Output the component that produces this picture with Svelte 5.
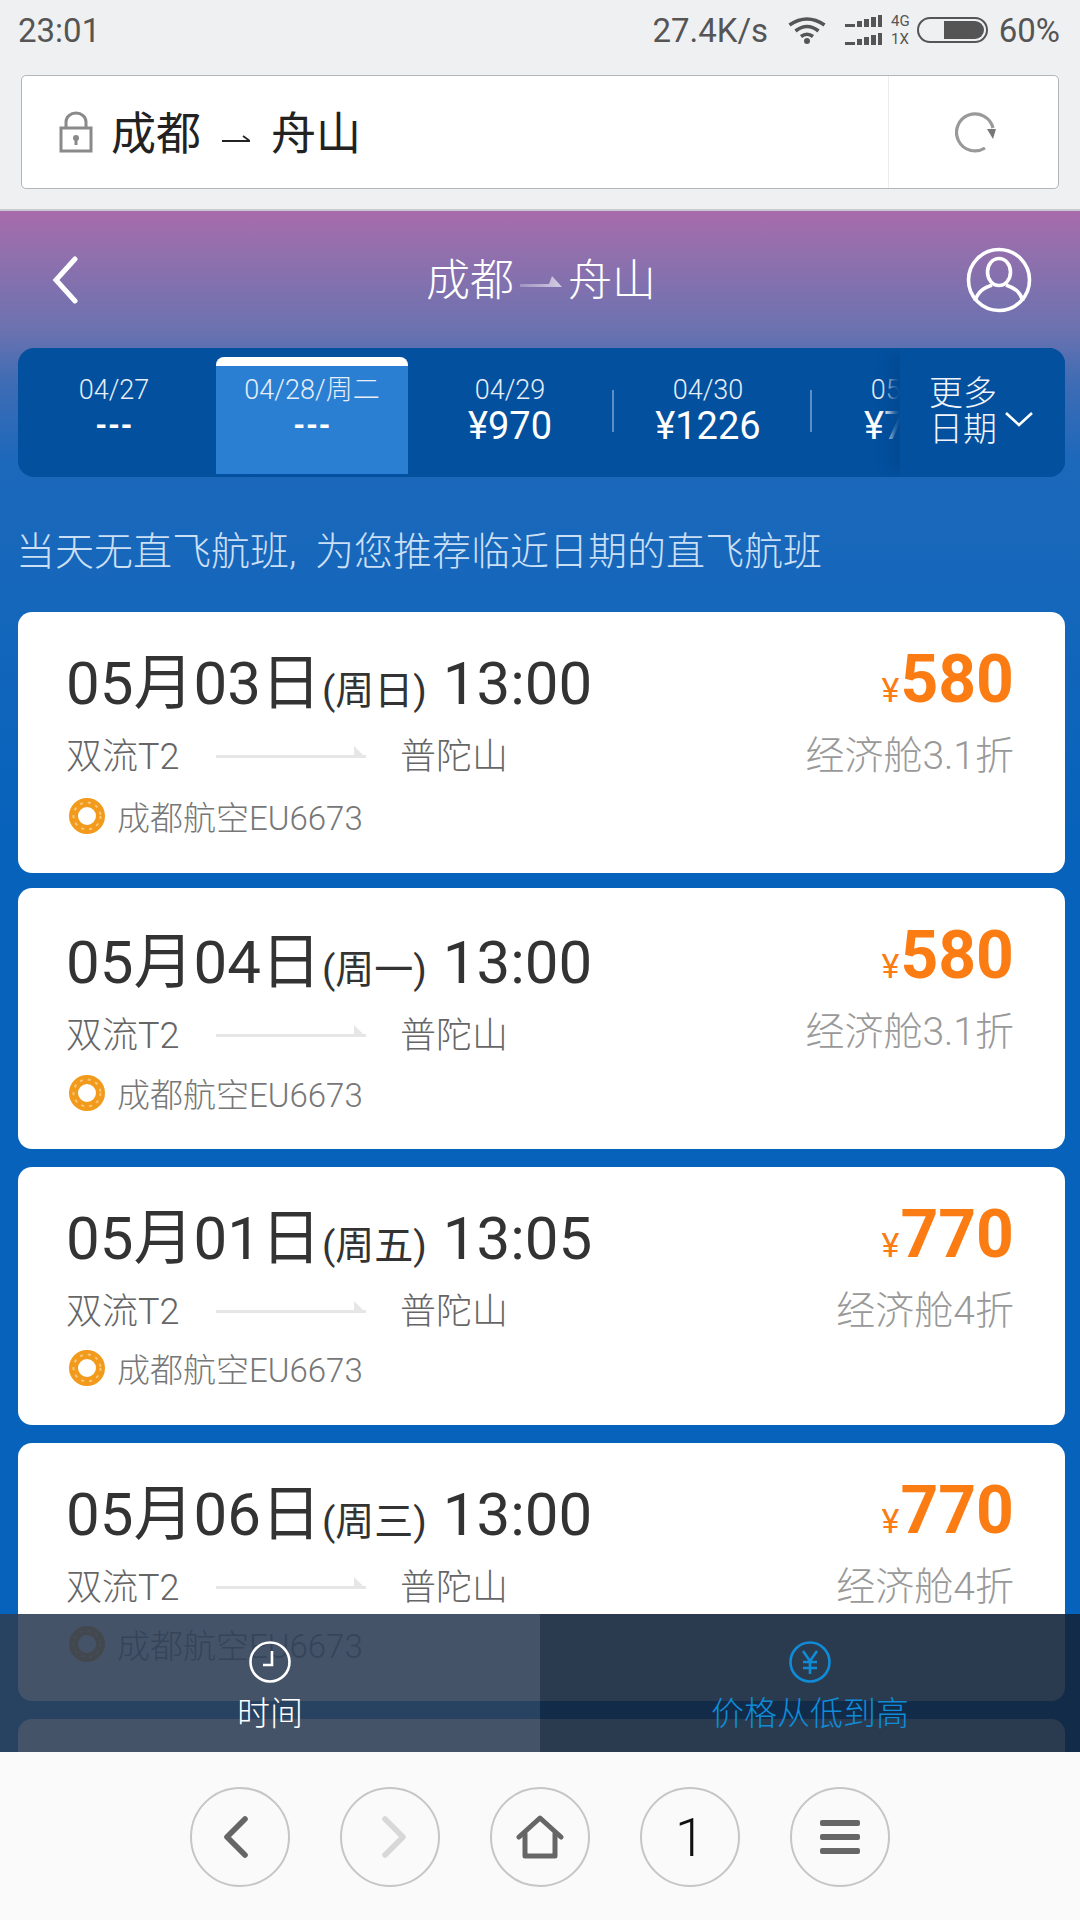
<script>
  const dates = [
    { day: '04/27', price: '---' },
    { day: '04/28/周二', price: '---', active: true },
    { day: '04/29', price: '¥970', line: true },
    { day: '04/30', price: '¥1226', line: true },
    { day: '05/01', price: '¥770' }
  ];

  const flights = [
    { date: '05月03日', week: '周日', time: '13:00', price: 580, cabin: '经济舱3.1折' },
    { date: '05月04日', week: '周一', time: '13:00', price: 580, cabin: '经济舱3.1折' },
    { date: '05月01日', week: '周五', time: '13:05', price: 770, cabin: '经济舱4折' },
    { date: '05月06日', week: '周三', time: '13:00', price: 770, cabin: '经济舱4折' }
  ];
</script>

<div class="screen">
  <div class="status">
    <span>23:01</span>
    <div class="status-right">
      <span>27.4K/s</span>
      <svg class="wifi" width="38" height="28" viewBox="0 0 38 28" fill="none" stroke="#555" stroke-width="3.6">
        <path d="M1.5 9 Q19 -3 36.5 9" />
        <path d="M7.5 15 Q19 6 30.5 15" />
        <path d="M13 20.5 Q19 16 25 20.5" />
        <circle cx="19" cy="25" r="3" fill="#555" stroke="none" />
      </svg>
      <svg class="signal" width="37" height="30" viewBox="0 0 37 30" fill="#555">
        <rect x="0" y="9" width="10" height="3" /><rect x="12" y="6" width="5" height="6" /><rect x="19" y="4" width="5" height="8" /><rect x="26" y="2" width="5" height="10" /><rect x="33" y="0" width="4" height="12" />
        <rect x="0" y="27" width="10" height="3" /><rect x="12" y="24" width="5" height="6" /><rect x="19" y="22" width="5" height="8" /><rect x="26" y="20" width="5" height="10" /><rect x="33" y="18" width="4" height="12" />
      </svg>
      <div class="net"><span>4G</span><span>1X</span></div>
      <div class="battery"><i></i></div>
      <span class="percent">60%</span>
    </div>
  </div>

  <div class="address-wrap">
    <div class="address">
      <div class="address-main">
        <svg width="34" height="42" viewBox="0 0 34 42" fill="none" stroke="#8a8a8a" stroke-width="3">
          <rect x="2" y="17" width="30" height="23" />
          <path d="M7 17 V11 a10 9 0 0 1 20 0 V17" />
          <circle cx="17" cy="27" r="3" fill="#8a8a8a" stroke="none" />
          <rect x="15.5" y="28" width="3" height="6" fill="#8a8a8a" stroke="none" />
        </svg>
        <span class="address-text">成都</span>
        <svg class="address-arrow" width="28" height="12" viewBox="0 0 28 12" fill="none" stroke="#222" stroke-width="1.8">
          <path d="M0 9 H28 L21 4" />
        </svg>
        <span class="address-text">舟山</span>
      </div>
      <div class="reload">
        <svg width="42" height="42" viewBox="0 0 42 42" fill="none" stroke="#999" stroke-width="3.2">
          <path d="M30 37 A18.5 18.5 0 1 1 38 17" />
          <path d="M32 18 L41 18 L38 28 Z" fill="#777" stroke="none" />
        </svg>
      </div>
    </div>
  </div>

  <div class="page">
    <div class="top">
      <svg width="30" height="48" viewBox="0 0 30 48" fill="none" stroke="#fff" stroke-width="5" stroke-linecap="round">
        <path d="M25 3 L6 24 L25 45" />
      </svg>
      <div class="title">
        <span>成都</span>
        <svg width="42" height="16" viewBox="0 0 42 16">
          <defs>
            <linearGradient id="titleArrow">
              <stop offset="0" stop-color="#fff" stop-opacity="0.25" />
              <stop offset="1" stop-color="#fff" stop-opacity="0.65" />
            </linearGradient>
          </defs>
          <path d="M0 10 H29 L32 2 L42 13 H0 Z" fill="url(#titleArrow)" />
        </svg>
        <span>舟山</span>
      </div>
      <svg class="avatar" width="66" height="66" viewBox="0 0 66 66" fill="none" stroke="#fff" stroke-width="3.6">
        <circle cx="33" cy="33" r="30.5" />
        <ellipse cx="33" cy="25" rx="11.5" ry="13.5" />
        <path d="M9 54 C12 44 18 41 26 38 M57 54 C54 44 48 41 40 38" />
      </svg>
    </div>

    <div class="strip">
      <div class="strip-days">
        {#each dates as d}
          <div class="slot" class:line={d.line}>
            <div class="day" class:active={d.active}>
              <div class="day-date">{d.day}</div>
              <div class="day-price" class:none={d.price === '---'}>{d.price}</div>
            </div>
          </div>
        {/each}
      </div>
      <div class="more">
        <div class="more-text">更多<br />日期</div>
        <svg width="30" height="16" viewBox="0 0 30 16" fill="none" stroke="#fff" stroke-width="2.6">
          <path d="M2 2 L15 14 L28 2" />
        </svg>
      </div>
    </div>

    <p class="notice">当天无直飞航班, 为您推荐临近日期的直飞航班</p>

    <div class="list">
      {#each flights as f}
        <div class="card">
          <div class="card-left">
            <div class="when">
              <span>{f.date}</span><span class="week">({f.week})</span><span class="time">{f.time}</span>
            </div>
            <div class="route">
              <span class="from">双流T2</span>
              <svg width="150" height="16" viewBox="0 0 150 16">
                <rect x="0" y="10" width="150" height="3" fill="#e6e6e6" /><path d="M138 13 L138 1 L150 13 Z" fill="#e6e6e6" />
              </svg>
              <span class="to">普陀山</span>
            </div>
            <div class="airline">
              <svg width="36" height="36" viewBox="0 0 36 36" fill="none">
                <circle cx="18" cy="18" r="13.5" stroke="#f29a1c" stroke-width="9" />
                <circle cx="18" cy="18" r="13.5" stroke="#fbc67a" stroke-width="2" stroke-dasharray="3 5" />
              </svg>
              <span>成都航空EU6673</span>
            </div>
          </div>
          <div class="card-right">
            <div class="price"><span class="yen">¥</span>{f.price}</div>
            <div class="cabin">{f.cabin}</div>
          </div>
        </div>
      {/each}
      <div class="card"></div>
    </div>

    <div class="sortbar">
      <div class="sort sort-time">
        <svg width="42" height="42" viewBox="0 0 42 42" fill="none" stroke="#fff" stroke-width="2.6">
          <circle cx="21" cy="21" r="19.5" />
          <path d="M23 10 V24 H14" />
        </svg>
        <span>时间</span>
      </div>
      <div class="sort sort-price">
        <svg width="42" height="42" viewBox="0 0 42 42" fill="none" stroke="#0f8bd8" stroke-width="2.6">
          <circle cx="21" cy="21" r="19.5" />
          <path d="M14 10 L21 20 L28 10 M21 20 V33 M14 21 H28 M14 27 H28" />
        </svg>
        <span>价格从低到高</span>
      </div>
    </div>
  </div>

  <div class="browser-nav">
    <div class="round">
      <svg class="nav-back" width="26" height="42" viewBox="0 0 26 42" fill="none" stroke="#666" stroke-width="5.6" stroke-linecap="round" stroke-linejoin="round">
        <path d="M22 3 L4 21 L22 39" />
      </svg>
    </div>
    <div class="round">
      <svg class="nav-next" width="26" height="42" viewBox="0 0 26 42" fill="none" stroke="#d8d8d8" stroke-width="5.6" stroke-linecap="round" stroke-linejoin="round">
        <path d="M4 3 L22 21 L4 39" />
      </svg>
    </div>
    <div class="round">
      <svg width="48" height="44" viewBox="0 0 48 44" fill="none" stroke="#666" stroke-width="5" stroke-linecap="round" stroke-linejoin="round">
        <path d="M3 22 L24 3 L45 22" />
        <path d="M9 19 V41 H39 V19" />
      </svg>
    </div>
    <div class="round count">1</div>
    <div class="round">
      <div class="bars"><i></i><i></i><i></i></div>
    </div>
  </div>
</div>

<style>
  :global(body) {
    margin: 0;
    background: #fafafa;
  }

  .screen {
    width: 1080px;
    height: 1920px;
    overflow: hidden;
    display: flex;
    flex-direction: column;
    font-family: Roboto, "Noto Sans CJK SC", sans-serif;
    color: #333;
  }

  .status {
    height: 60px;
    background: #eff0f2;
    color: #555;
    font-size: 33px;
    display: flex;
    align-items: center;
    justify-content: space-between;
    padding: 0 20px 0 18px;
    flex-shrink: 0;
  }

  .status-right {
    display: flex;
    align-items: center;
  }

  .wifi {
    margin-left: 20px;
  }

  .signal {
    margin-left: 19px;
  }

  .net {
    display: flex;
    flex-direction: column;
    font-size: 15px;
    line-height: 18px;
    margin-left: 9px;
  }

  .battery {
    width: 71px;
    height: 26px;
    border: 2px solid #555;
    border-radius: 14px;
    box-sizing: border-box;
    display: flex;
    justify-content: flex-end;
    padding: 2px;
    margin-left: 7px;
  }

  .battery i {
    width: 40px;
    background: #555;
    border-radius: 0 9px 9px 0;
  }

  .percent {
    margin-left: 11px;
  }

  .address-wrap {
    height: 149px;
    background: #eff0f2;
    padding: 15px 21px 0;
    box-sizing: border-box;
    flex-shrink: 0;
  }

  .address {
    height: 114px;
    box-sizing: border-box;
    background: #fff;
    border: 1px solid #b5b5b5;
    border-radius: 5px;
    display: flex;
  }

  .address-main {
    flex: 1;
    display: flex;
    align-items: center;
    padding-left: 37px;
    border-right: 1px solid #ececec;
  }

  .address-text {
    font-size: 45px;
    color: #222;
    margin: 0 0 4px 18px;
  }

  .address-arrow {
    margin: 12px 3px 0 21px;
  }

  .reload {
    width: 169px;
    display: flex;
    align-items: center;
    justify-content: center;
    padding-left: 4px;
    box-sizing: border-box;
  }

  .page {
    position: relative;
    flex: 1;
    overflow: hidden;
    border-top: 2px solid #c9c9d2;
    padding: 0 15px 0 18px;
    background: linear-gradient(180deg, #a86bab 0, #8d70ad 50px, #6b72b0 120px, #3f6cb4 170px, #1c68bb 250px, #1467bb 400px, #0762bb 620px);
  }

  .top {
    height: 137px;
    display: grid;
    grid-template-columns: 1fr auto 1fr;
    align-items: center;
    padding: 0 33px 0 32px;
  }

  .avatar {
    justify-self: end;
  }

  .title {
    display: flex;
    align-items: center;
    color: #fff;
    font-size: 44px;
    font-weight: 300;
    gap: 6px;
    margin-bottom: 6px;
  }

  .title svg {
    margin-top: 10px;
  }

  .strip {
    height: 129px;
    background: #03509e;
    border-radius: 16px;
    display: flex;
    overflow: hidden;
  }

  .strip-days {
    flex: 1;
    display: flex;
    overflow: hidden;
    margin-left: -3px;
  }

  .slot {
    position: relative;
    width: 198px;
    flex-shrink: 0;
    padding: 9px 3px 3px;
    box-sizing: border-box;
  }

  .slot.line::after {
    content: '';
    position: absolute;
    right: -5px;
    top: 42px;
    height: 42px;
    width: 2px;
    background: #5d8fc4;
  }

  .day {
    height: 100%;
    box-sizing: border-box;
    border-top: 9px solid transparent;
    border-radius: 8px 8px 0 0;
    color: #e6eef8;
    text-align: center;
  }

  .day.active {
    background: #2a7fd2;
    border-top-color: #fff;
  }

  .day-date {
    font-size: 27px;
    line-height: 30px;
    padding-top: 9px;
    font-weight: 300;
  }

  .day-price {
    font-size: 38px;
    line-height: 42px;
    color: #fff;
  }

  .day-price.none {
    font-size: 28px;
    font-weight: 900;
  }

  .more {
    width: 165px;
    flex-shrink: 0;
    background: #03509e;
    box-shadow: -18px 0 10px -8px #034a93;
    color: #f1f5fb;
    display: flex;
    align-items: center;
    padding-left: 29px;
    box-sizing: border-box;
    gap: 7px;
    position: relative;
  }

  .more svg {
    margin-top: 12px;
  }

  .more-text {
    font-size: 34px;
    line-height: 36px;
    font-weight: 300;
    margin-top: -3px;
  }

  .notice {
    margin: 0 0 0 -2px;
    height: 135px;
    padding-top: 6px;
    box-sizing: border-box;
    display: flex;
    align-items: center;
    color: #cbdff5;
    font-size: 39px;
    font-weight: 300;
    word-spacing: 9px;
  }

  .list {
    display: flex;
    flex-direction: column;
    gap: 15px;
  }

  .card {
    height: 261px;
    flex-shrink: 0;
    background: #fff;
    border-radius: 14px;
    display: flex;
    justify-content: space-between;
    padding: 0 51px 0 48px;
    box-sizing: border-box;
  }

  .card:nth-child(n + 3) {
    height: 258px;
    margin-top: 3px;
  }

  .card:nth-child(2) .card-left {
    padding-top: 3px;
  }

  .card:nth-child(2) .airline {
    margin-top: 17px;
  }

  .card:nth-child(n + 3) .airline {
    margin-top: 16px;
  }

  .when {
    font-size: 60px;
    line-height: 68px;
    margin-top: 38px;
    white-space: nowrap;
  }

  .week {
    font-size: 39px;
    margin: 0 16px 0 1px;
  }

  .route {
    display: flex;
    align-items: center;
    font-size: 36px;
    font-weight: 300;
    color: #666;
    margin-top: 6px;
    height: 44px;
  }

  .from {
    width: 150px;
  }

  .to {
    margin-left: 34px;
  }

  .airline {
    display: flex;
    align-items: center;
    gap: 12px;
    font-size: 33px;
    font-weight: 300;
    color: #777;
    margin-top: 19px;
    height: 44px;
  }

  .airline svg {
    margin-left: 3px;
  }

  .card-right {
    text-align: right;
  }

  .price {
    font-size: 66px;
    font-weight: 700;
    line-height: 80px;
    color: #fc7c14;
    margin-top: 28px;
  }

  .yen {
    font-size: 34px;
    font-weight: 400;
    margin-right: 1px;
  }

  .cabin {
    font-size: 39px;
    font-weight: 300;
    color: #999;
    margin-top: -6px;
  }

  .sortbar {
    position: absolute;
    left: 0;
    right: 0;
    bottom: 0;
    height: 138px;
    display: flex;
  }

  .sort {
    flex: 1;
    display: flex;
    flex-direction: column;
    align-items: center;
    padding-top: 27px;
    gap: 4px;
    box-sizing: border-box;
    font-size: 33px;
    font-weight: 300;
  }

  .sort-time {
    background: rgba(45, 62, 85, 0.89);
    color: #fff;
  }

  .sort-price {
    background: rgba(20, 38, 60, 0.9);
    color: #0f8bd8;
  }

  .browser-nav {
    height: 168px;
    flex-shrink: 0;
    background: #fafafa;
    display: flex;
    justify-content: center;
    align-items: flex-start;
    padding-top: 35px;
    box-sizing: border-box;
    gap: 50px;
  }

  .round {
    width: 100px;
    height: 100px;
    box-sizing: border-box;
    border: 2px solid #c6c6c6;
    border-radius: 50%;
    display: flex;
    align-items: center;
    justify-content: center;
  }

  .nav-back {
    margin-right: 8px;
  }

  .nav-next {
    margin-left: 8px;
  }

  .count {
    font-size: 54px;
    font-weight: 300;
    color: #111;
  }

  .bars {
    width: 40px;
    display: flex;
    flex-direction: column;
    gap: 8px;
  }

  .bars i {
    height: 6px;
    background: #666;
    border-radius: 2px;
  }
</style>
